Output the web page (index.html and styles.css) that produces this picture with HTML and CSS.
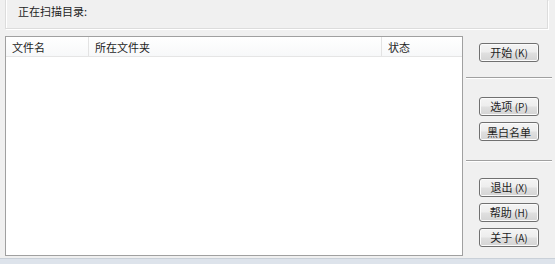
FILE: index.html
```html
<!DOCTYPE html>
<html lang="zh-CN">
<head>
<meta charset="utf-8">
<title>扫描</title>
<link rel="stylesheet" href="styles.css">
</head>
<body>
<div class="window">
  <div class="scan-panel">
    <span class="scan-label">正在扫描目录:</span>
  </div>
  <div class="main">
    <div class="listbox">
      <div class="list-header">
        <div class="col col-name">文件名</div>
        <div class="col col-folder">所在文件夹</div>
        <div class="col col-status">状态</div>
      </div>
      <div class="list-body"></div>
    </div>
    <div class="side">
      <div class="group group-top">
        <button class="btn">开始 <span class="key">(K)</span></button>
      </div>
      <div class="sep"></div>
      <div class="group group-mid">
        <button class="btn">选项 <span class="key">(P)</span></button>
        <button class="btn">黑白名单</button>
      </div>
      <div class="sep"></div>
      <div class="group group-bottom">
        <button class="btn">退出 <span class="key">(X)</span></button>
        <button class="btn">帮助 <span class="key">(H)</span></button>
        <button class="btn">关于 <span class="key">(A)</span></button>
      </div>
    </div>
  </div>
  <div class="statusbar"></div>
</div>
</body>
</html>
```
FILE: styles.css
```css
html, body {
  margin: 0;
  padding: 0;
  background: #f0f0f0;
}
body {
  font-family: "Noto Sans CJK SC", "DejaVu Sans", sans-serif;
  font-size: 11px;
  color: #1e1e1e;
  width: 555px;
  height: 264px;
  overflow: hidden;
}
.window {
  display: flex;
  flex-direction: column;
  height: 264px;
}
.scan-panel {
  margin-left: 5px;
  width: 541px;
  height: 29px;
  border: 1px solid #dcdcdc;
  border-top: none;
  box-shadow: inset 1px 0 0 #fff, 1px 1px 0 #fff;
  display: flex;
  align-items: center;
  box-sizing: content-box;
}
.scan-label {
  margin-left: 12px;
  margin-top: -7px;
  line-height: 14px;
}
.main {
  display: flex;
  margin-top: 7px;
  height: 220px;
}
.listbox {
  margin-left: 5px;
  width: 456px;
  height: 218px;
  border: 1px solid #a0a0a0;
  background: #fff;
  display: flex;
  flex-direction: column;
}
.list-header {
  display: flex;
  height: 19px;
  border-bottom: 1px solid #e5e5e5;
  background: linear-gradient(#ffffff, #f7f8f9);
}
.col {
  display: flex;
  align-items: center;
  padding-left: 6px;
  line-height: 14px;
  border-right: 1px solid #e3e3e3;
  box-sizing: border-box;
}
.col-name { width: 83px; }
.col-folder { width: 293px; }
.col-status { width: 80px; border-right: none; }
.list-body { flex: 1; }
.side {
  display: flex;
  flex-direction: column;
  width: 92px;
}
.group {
  display: flex;
  flex-direction: column;
  gap: 6px;
  padding-left: 16px;
}
.group-top { padding-top: 7px; }
.group-mid { padding-top: 18px; }
.group-bottom { padding-top: 16px; }
.sep {
  margin-left: 3px;
  width: 86px;
  height: 0;
  border-top: 1px solid #a0a0a0;
  border-bottom: 1px solid #fff;
}
.group-top + .sep { margin-top: 15px; }
.group-mid + .sep { margin-top: 19px; }
.btn {
  width: 60px;
  height: 19px;
  padding: 0;
  margin: 0;
  font-family: inherit;
  font-size: 11px;
  line-height: 14px;
  color: #1e1e1e;
  border: 1px solid #707070;
  border-radius: 3px;
  background: linear-gradient(#f4f4f4 0%, #ededed 48%, #e0e0e0 52%, #d4d4d4 100%);
  box-shadow: inset 0 0 0 1px #fbfbfb;
}
.key {
  font-size: 10px;
}
.statusbar {
  margin-top: 2px;
  height: 5px;
  background: #dde3eb;
  border-top: 1px solid #c9d0d8;
}
```
